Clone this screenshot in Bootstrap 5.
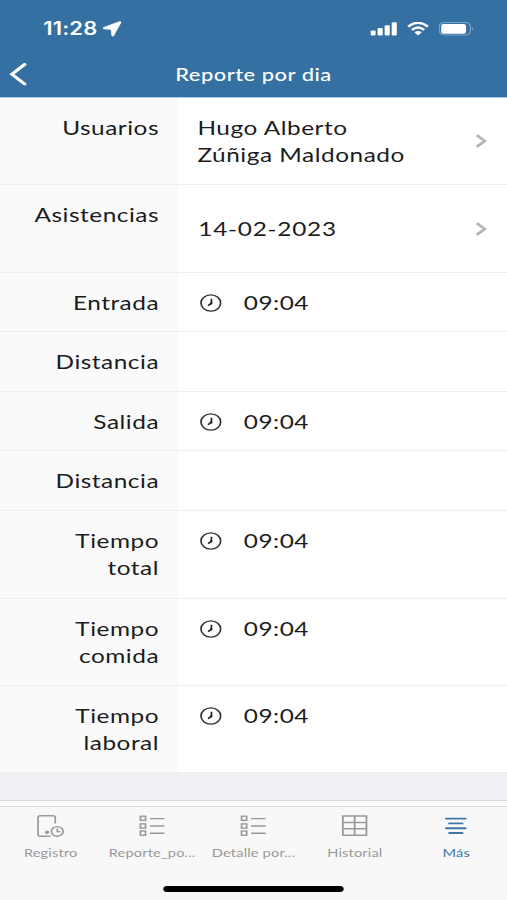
<!DOCTYPE html>
<html lang="es">
<head>
<meta charset="utf-8">
<meta name="viewport" content="width=device-width, initial-scale=1">
<title>Reporte por dia</title>
<link href="https://cdn.jsdelivr.net/npm/bootstrap@5.3.0/dist/css/bootstrap.min.css" rel="stylesheet">
<style>
html, body { height: 900px; overflow: hidden; }
body { font-family: Lato, "Open Sans", sans-serif; color: #1c1c1e; }
/* wide rendering: a 416px layout stretched across the window */
.phone { width: 416px; height: 900px; transform: scaleX(1.21875); transform-origin: 0 0; background: #fff; }
.topbar { height: 98px; background: #3470a2; border-bottom: 1px solid #a9cbe6; }
.statusbar { height: 52px; padding: 5px 27px 0 35.5px; }
.clock-text { font: 600 18px Inter, sans-serif; letter-spacing: .15px; line-height: 24px; }
.titlebar { display: grid; grid-template-columns: 40px 1fr 40px; height: 44px; }
.titlebar h1 { font-size: 18px; letter-spacing: .4px; line-height: 24px; font-weight: 500; }
.back-icon { margin-left: 7px; }
.field { border-bottom: 1px solid #eeeef0; font-size: 20px; line-height: 27.4px; }
.field-label { width: 146px; background: #fafafa; padding: 16px 15.5px 0 12px; letter-spacing: .43px; }
.field-value { padding: 15.5px 16px 15px; letter-spacing: .43px; }
.date-text { letter-spacing: .6px; padding-left: .7px; }
.h-two { height: 87px; } .h-twob { height: 88px; } .h-one { height: 59px; } .h-oneb { height: 60px; }
.time-icon { margin: 1px 18px 0 2px; }
.band { height: 27px; background: #efeff4; }
.strip { height: 7px; border-top: 1px solid #d9d9dc; border-bottom: 1px solid #d9d9dc; background: #fff; }
.tabs { height: 93px; background: #f8f8f8; }
.tab-item { width: 83.2px; color: #999; font-size: 12px; line-height: 16px; letter-spacing: .12px; padding-top: 7px; }
.tab-item svg { height: 24px; margin-bottom: 7px; }
.tab-on { color: #3f76a5; }
.home-bar { width: 148px; height: 6px; border-radius: 3px; background: #000; margin-top: 25px; }
</style>
</head>
<body>
<svg class="d-none">
  <symbol id="clk" viewBox="0 0 18 18"><circle cx="9" cy="9" r="8.1" fill="none" stroke="#333" stroke-width="1.4"/><path d="M9.5 4.8V9.3L6.7 11.6" fill="none" stroke="#222" stroke-width="1.4"/><circle cx="9.2" cy="9.4" r="1.1" fill="#222"/></symbol>
  <symbol id="chev" viewBox="0 0 10 16"><path d="M1.2 2.2L7.8 8L1.2 13.8" fill="none" stroke="#b4b4b6" stroke-width="2.5"/></symbol>
  <symbol id="list" viewBox="0 0 22 24"><g fill="none" stroke="currentColor" stroke-width="1.4"><rect x="1.2" y="2.2" width="4.2" height="4.2"/><rect x="1.2" y="9.9" width="4.2" height="4.2"/><rect x="1.2" y="17" width="4.2" height="4.2"/><path d="M9 4.6H21M9 12H21M9 19.3H21"/></g></symbol>
</svg>
<div class="phone d-flex flex-column">
  <header class="topbar text-white flex-shrink-0">
    <div class="statusbar d-flex align-items-center justify-content-between">
      <div class="d-flex align-items-center gap-1">
        <span class="clock-text">11:28</span>
        <svg width="16" height="16" viewBox="0 0 15 15"><path d="M13.4 .5L.9 6Q0 6.8 1.1 7.4L6.6 7.9L7.2 13.6Q7.8 15 8.7 13.8L14.3 1.5Q14.4 .3 13.4 .5Z" fill="#fff" stroke="#fff" stroke-width=".5"/></svg>
      </div>
      <div class="d-flex align-items-center">
        <svg width="22" height="14" viewBox="0 0 22 14" fill="#fff"><rect x="0" y="8.5" width="4.2" height="5" rx="1"/><rect x="5.8" y="6.1" width="4.2" height="7.4" rx="1"/><rect x="11.6" y="3.3" width="4.2" height="10.2" rx="1"/><rect x="17.4" y="0.3" width="4.2" height="13.2" rx="1"/></svg>
        <svg class="ms-2" width="18" height="14" viewBox="0 0 18 14"><g fill="none" stroke="#fff" stroke-width="2.3"><path d="M.9 4.6Q9-3 17.1 4.6"/><path d="M4 7.9Q9 3.2 14 7.9"/></g><path d="M6 10.3Q9 7.5 12 10.3L9 13.5Z" fill="#fff"/></svg>
        <svg class="ms-2" width="29" height="14" viewBox="0 0 29 14"><rect x=".5" y=".5" width="25.5" height="12.5" rx="4" fill="none" stroke="#7ba4c7"/><rect x="2" y="1.9" width="20.4" height="9.8" rx="2" fill="#fff"/><path d="M27.2 4.7Q28.8 6.7 27.2 8.7Z" fill="#8fb2d0"/></svg>
      </div>
    </div>
    <div class="titlebar align-items-center text-center">
      <svg class="back-icon" width="16" height="24" viewBox="0 0 16 24"><path d="M13.2 2.4L2.8 12.2L13.2 22" fill="none" stroke="#fff" stroke-width="2.9" stroke-linecap="round"/></svg>
      <h1 class="m-0">Reporte por dia</h1>
    </div>
  </header>

  <main>
    <div class="field h-two d-flex">
      <div class="field-label text-end">Usuarios</div>
      <div class="field-value d-flex flex-fill align-items-center justify-content-between"><span>Hugo Alberto<br>Zúñiga Maldonado</span><svg width="10" height="16"><use href="#chev"/></svg></div>
    </div>
    <div class="field h-twob d-flex">
      <div class="field-label text-end">Asistencias</div>
      <div class="field-value d-flex flex-fill align-items-center justify-content-between"><span class="date-text">14-02-2023</span><svg width="10" height="16"><use href="#chev"/></svg></div>
    </div>
    <div class="field h-one d-flex">
      <div class="field-label text-end">Entrada</div>
      <div class="field-value d-flex align-items-center align-self-start"><svg class="time-icon" width="18" height="18"><use href="#clk"/></svg><span>09:04</span></div>
    </div>
    <div class="field h-oneb d-flex"><div class="field-label text-end">Distancia</div></div>
    <div class="field h-one d-flex">
      <div class="field-label text-end">Salida</div>
      <div class="field-value d-flex align-items-center align-self-start"><svg class="time-icon" width="18" height="18"><use href="#clk"/></svg><span>09:04</span></div>
    </div>
    <div class="field h-oneb d-flex"><div class="field-label text-end">Distancia</div></div>
    <div class="field h-twob d-flex">
      <div class="field-label text-end">Tiempo<br>total</div>
      <div class="field-value d-flex align-items-center align-self-start"><svg class="time-icon" width="18" height="18"><use href="#clk"/></svg><span>09:04</span></div>
    </div>
    <div class="field h-two d-flex">
      <div class="field-label text-end">Tiempo<br>comida</div>
      <div class="field-value d-flex align-items-center align-self-start"><svg class="time-icon" width="18" height="18"><use href="#clk"/></svg><span>09:04</span></div>
    </div>
    <div class="field h-two d-flex">
      <div class="field-label text-end">Tiempo<br>laboral</div>
      <div class="field-value d-flex align-items-center align-self-start"><svg class="time-icon" width="18" height="18"><use href="#clk"/></svg><span>09:04</span></div>
    </div>
  </main>

  <div class="band flex-shrink-0"></div>
  <div class="strip flex-shrink-0"></div>
  <footer class="tabs flex-shrink-0">
    <nav class="d-flex text-center">
      <div class="tab-item d-flex flex-column align-items-center"><svg width="23" viewBox="0 0 23 24"><g fill="none" stroke="currentColor" stroke-width="1.4"><path d="M11.5 22.3H3Q1.2 22.3 1.2 20.5V3.5Q1.2 1.7 3 1.7H13.5Q15.3 1.7 15.3 3.5V9.5"/><circle cx="17" cy="17.4" r="4.8"/><path d="M17 14.4V17.6H19.5"/></g><circle cx="8.6" cy="18.3" r="1.7" fill="currentColor"/></svg>Registro</div>
      <div class="tab-item d-flex flex-column align-items-center"><svg width="22"><use href="#list"/></svg>Reporte_po...</div>
      <div class="tab-item d-flex flex-column align-items-center"><svg width="22"><use href="#list"/></svg>Detalle por...</div>
      <div class="tab-item d-flex flex-column align-items-center"><svg width="22" viewBox="0 0 22 24"><path d="M1.3 2H20.7V21.2H1.3ZM11 2V21.2M1.3 8.4H20.7M1.3 14.8H20.7" fill="none" stroke="currentColor" stroke-width="1.5"/></svg>Historial</div>
      <div class="tab-item tab-on d-flex flex-column align-items-center"><svg width="18" viewBox="0 0 18 24"><path d="M1 4.6H17M3.7 9.4H14.3M1 14.2H17M3.7 19H14.3" fill="none" stroke="currentColor" stroke-width="1.9" stroke-linecap="round"/></svg>Más</div>
    </nav>
    <div class="home-bar mx-auto"></div>
  </footer>
</div>
<script src="https://cdn.jsdelivr.net/npm/bootstrap@5.3.0/dist/js/bootstrap.bundle.min.js"></script>
</body>
</html>
